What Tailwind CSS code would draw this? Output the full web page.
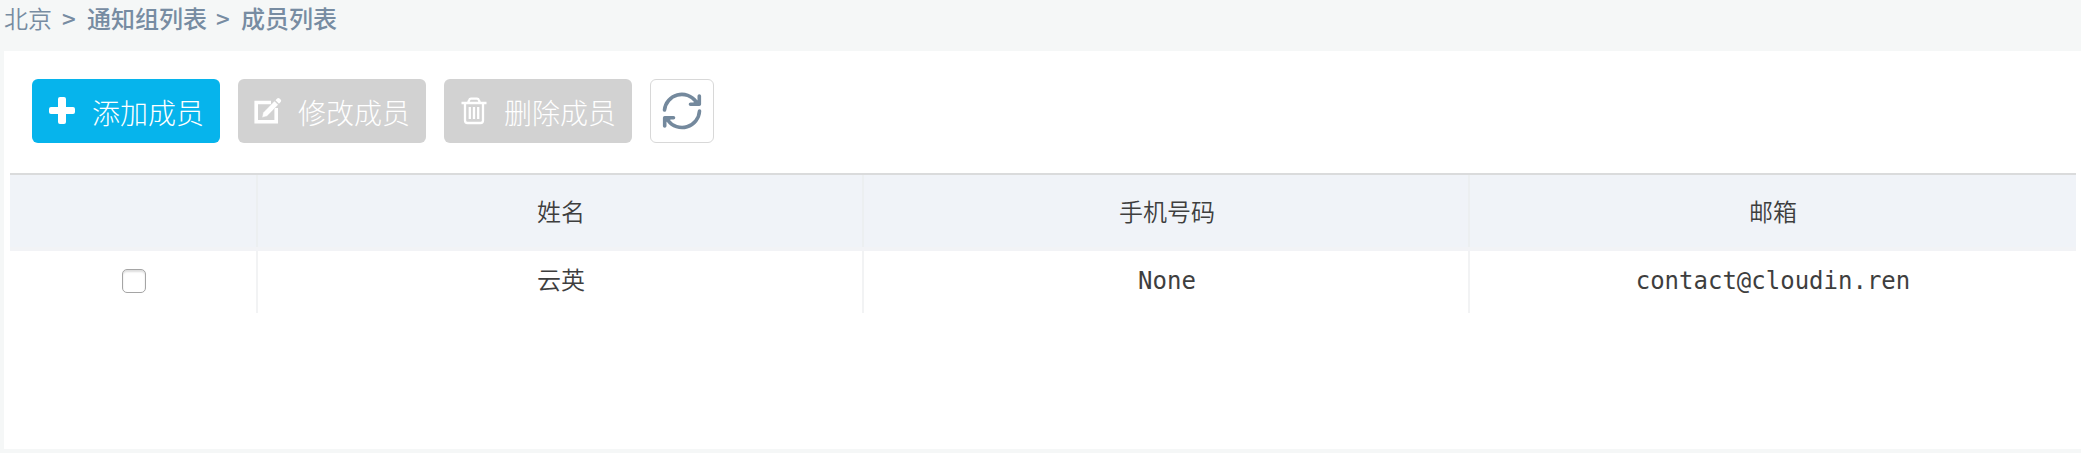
<!DOCTYPE html>
<html lang="zh-CN">
<head>
<meta charset="utf-8">
<title>成员列表</title>
<script src="https://cdn.jsdelivr.net/npm/@tailwindcss/browser@4"></script>
</head>
<body class="h-[453px] overflow-hidden bg-[#f5f7f7] font-['Noto_Sans_CJK_SC',sans-serif] text-2xl text-[#3e3e3e] flex flex-col">
<nav class="flex h-[51px] shrink-0 pl-1 text-[#778ca2] leading-9 whitespace-nowrap">
  <span class="w-[58px] font-[350]">北京</span>
  <span class="w-[25px] font-medium">&gt;</span>
  <span class="w-[129px] font-medium">通知组列表</span>
  <span class="w-[25px] font-medium">&gt;</span>
  <span class="font-medium">成员列表</span>
</nav>
<main class="ml-1 h-[398px] shrink-0 bg-white">
  <div class="flex h-[122px] gap-[18px] pl-7 pt-7">
    <button class="flex h-16 w-[188px] items-center rounded-md bg-[#06b4ec] pl-4 text-[28px] font-light text-white">
      <svg class="mr-[16px] h-7 w-7 shrink-0" viewBox="0 0 28 28" fill="currentColor"><path d="M12 0h4a2 2 0 0 1 2 2v8h7a2 2 0 0 1 2 2v3a2 2 0 0 1-2 2h-7v8a2 2 0 0 1-2 2h-4a2 2 0 0 1-2-2v-8H3a2 2 0 0 1-2-2v-3a2 2 0 0 1 2-2h7V2a2 2 0 0 1 2-2z"/></svg>
      <span class="pt-[3px] whitespace-nowrap">添加成员</span>
    </button>
    <button class="flex h-16 w-[188px] items-center rounded-md bg-[#d2d2d2] pl-4 text-[28px] font-light text-white">
      <svg class="mr-[16px] h-7 w-7 shrink-0" viewBox="0 0 28 28" fill="none"><path d="M17 5.500H2.200v19.300h20V11" stroke="currentColor" stroke-width="3.6"/><path d="M8 20.500l1.200-5L20.500 4l3.700 3.700L13 19.200z" fill="currentColor" stroke="#d2d2d2" stroke-width="0.4"/><path d="M21.500 3.200l1.600-1.700a1.700 1.700 0 0 1 2.400 0l1.100 1.100a1.700 1.700 0 0 1 0 2.400l-1.600 1.700z" fill="currentColor"/></svg>
      <span class="pt-[3px] whitespace-nowrap">修改成员</span>
    </button>
    <button class="flex h-16 w-[188px] items-center rounded-md bg-[#d2d2d2] pl-4 text-[28px] font-light text-white">
      <svg class="mr-[16px] h-7 w-7 shrink-0" viewBox="0 0 28 28" fill="none" stroke="currentColor" stroke-width="2.3"><path d="M1.500 6h25M8 6l1.200-3.200Q9.600 1.600 11 1.600h6q1.400 0 1.800 1.200L20 6M5 6v17.500Q5 26 7.500 26h13q2.500 0 2.500-2.500V6M9.800 10v12M14 10v12M18.200 10v12"/></svg>
      <span class="pt-[3px] whitespace-nowrap">删除成员</span>
    </button>
    <button class="flex h-16 w-16 items-center justify-center rounded-md border border-[#d8d8d8] bg-white text-[#74899d]">
      <svg class="h-10 w-10" viewBox="0 0 40 40" fill="none" stroke="currentColor" stroke-width="3.6" stroke-linecap="round" stroke-linejoin="round"><path d="M2.500 19A17.500 17.500 0 0 1 34 10.500M37.500 20A17.500 17.500 0 0 1 6 29.500"/><path d="M37.300 5v8.300h-8.800M2.700 35v-8.300h8.800"/><path d="M30 13l7-4v4zM10 27l-7 4v-4z" fill="currentColor" stroke-width="1"/></svg>
    </button>
  </div>
  <div class="ml-1.5 w-[2066px] text-center">
    <div class="grid h-[78px] grid-cols-[248px_606px_606px_606px] border-t-2 border-[#dadbdc] bg-[#f0f3f8] font-[350]">
      <div class="border-b-4 border-[#f2f3f6] shadow-[inset_-2px_0_0_#eceff1]"></div>
      <div class="border-b-4 border-[#f2f3f6] pt-[18px] leading-9 shadow-[inset_-2px_0_0_#eceff1]">姓名</div>
      <div class="border-b-4 border-[#f2f3f6] pt-[18px] leading-9 shadow-[inset_-2px_0_0_#eceff1]">手机号码</div>
      <div class="border-b-4 border-[#f2f3f6] pt-[18px] leading-9">邮箱</div>
    </div>
    <div class="grid h-[62px] grid-cols-[248px_606px_606px_606px] leading-9">
      <div class="flex justify-center border-r-2 border-[#f2f3f4] pl-1 pt-[18px] pr-0.5"><input type="checkbox" class="h-6 w-6 appearance-none rounded-[5px] border border-[#a5a5a5] bg-white shadow-[inset_0_2px_2px_#dedede]"></div>
      <div class="border-r-2 border-[#f2f3f4] pt-[10px] pl-0.5 font-[350]">云英</div>
      <div class="border-r-2 border-[#f2f3f4] pt-3 pl-0.5 font-['DejaVu_Sans_Mono',monospace]">None</div>
      <div class="pt-3 font-['DejaVu_Sans_Mono',monospace]">contact@cloudin.ren</div>
    </div>
  </div>
</main>
</body>
</html>
